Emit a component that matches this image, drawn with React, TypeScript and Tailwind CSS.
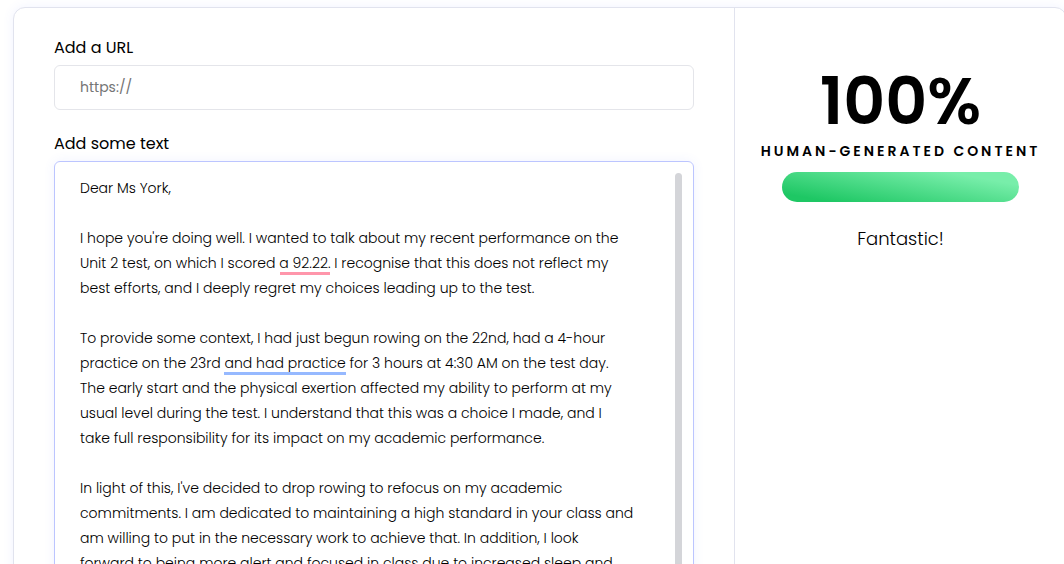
import { useState } from "react";

const initialText = `Dear Ms York,

I hope you're doing well. I wanted to talk about my recent performance on the
Unit 2 test, on which I scored a 92.22. I recognise that this does not reflect my
best efforts, and I deeply regret my choices leading up to the test.

To provide some context, I had just begun rowing on the 22nd, had a 4-hour
practice on the 23rd and had practice for 3 hours at 4:30 AM on the test day.
The early start and the physical exertion affected my ability to perform at my
usual level during the test. I understand that this was a choice I made, and I
take full responsibility for its impact on my academic performance.

In light of this, I've decided to drop rowing to refocus on my academic
commitments. I am dedicated to maintaining a high standard in your class and
am willing to put in the necessary work to achieve that. In addition, I look
forward to being more alert and focused in class due to increased sleep and`;

function UrlField() {
  return (
    <div className="flex flex-col gap-[5px]">
      <label htmlFor="url" className="text-base leading-6">
        Add a URL
      </label>
      <input
        id="url"
        type="url"
        placeholder="https://"
        className="h-[45px] w-full rounded-md border border-[#e4e5ea] px-[25px] text-sm outline-none placeholder:text-[#757575]"
      />
    </div>
  );
}

/* Grammar hints drawn over the text, shown while the text is unedited. */
function GrammarMarks() {
  return (
    <div aria-hidden="true" className="pointer-events-none absolute inset-0">
      <span className="absolute top-[110px] left-[225px] h-[3px] w-[50px] bg-[#ff96ab]" />
      <span className="absolute top-[210px] left-[169px] h-[3px] w-[122px] bg-[#96b9ff]" />
    </div>
  );
}

function TextField() {
  const [value, setValue] = useState(initialText);
  return (
    <div className="flex flex-col gap-[5px]">
      <label htmlFor="content" className="text-base leading-6">
        Add some text
      </label>
      <div className="flex h-[500px] overflow-hidden rounded-md border border-[#bcc5ff] shadow-[0_0_12px_rgba(80,100,255,0.08)]">
        <div className="relative min-w-0 flex-1">
          <textarea
            id="content"
            value={value}
            onChange={(e) => setValue(e.target.value)}
            spellCheck={false}
            className="block h-full w-full resize-none bg-transparent pt-[14px] pl-[25px] text-sm leading-[25px] font-light outline-none"
          />
          {value === initialText && <GrammarMarks />}
        </div>
        <div className="mt-[11px] mr-[11px] w-[7px] shrink-0 rounded-full bg-[#d4d5d9]" />
      </div>
    </div>
  );
}

function Score() {
  return (
    <aside className="flex w-[332px] shrink-0 flex-col items-center border-l border-[#e1e3ee] pt-[60px] text-center">
      <p className="text-[65px] leading-[68px] font-semibold">100%</p>
      <p className="mt-[3px] text-sm leading-6 font-semibold tracking-[3px] whitespace-nowrap uppercase">
        Human-generated content
      </p>
      <div
        role="img"
        aria-label="100% human-generated"
        className="mt-[9px] h-[30px] w-[237px] rounded-full bg-[linear-gradient(10deg,#1ec764_12%,#78eeaa_82%)]"
      />
      <p className="mt-[25px] text-lg leading-6 font-light">Fantastic!</p>
    </aside>
  );
}

export default function App() {
  return (
    <div className="h-screen overflow-hidden bg-white pt-[7px] pl-[13px] font-['Poppins','Inter',sans-serif] text-black">
      <main className="-mr-[3px] flex rounded-xl border border-[#e1e3ee] bg-white shadow-[0_0_12px_rgba(80,100,255,0.08)]">
        <section className="flex min-w-0 flex-1 flex-col gap-[22px] px-10 pt-7 pb-10">
          <UrlField />
          <TextField />
        </section>
        <Score />
      </main>
    </div>
  );
}
